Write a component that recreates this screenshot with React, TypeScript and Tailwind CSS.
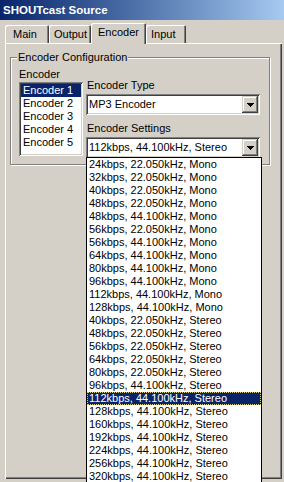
import React from 'react';

const settings = [
  '24kbps, 22.050kHz, Mono',
  '32kbps, 22.050kHz, Mono',
  '40kbps, 22.050kHz, Mono',
  '48kbps, 22.050kHz, Mono',
  '48kbps, 44.100kHz, Mono',
  '56kbps, 22.050kHz, Mono',
  '56kbps, 44.100kHz, Mono',
  '64kbps, 44.100kHz, Mono',
  '80kbps, 44.100kHz, Mono',
  '96kbps, 44.100kHz, Mono',
  '112kbps, 44.100kHz, Mono',
  '128kbps, 44.100kHz, Mono',
  '40kbps, 22.050kHz, Stereo',
  '48kbps, 22.050kHz, Stereo',
  '56kbps, 22.050kHz, Stereo',
  '64kbps, 22.050kHz, Stereo',
  '80kbps, 22.050kHz, Stereo',
  '96kbps, 44.100kHz, Stereo',
  '112kbps, 44.100kHz, Stereo',
  '128kbps, 44.100kHz, Stereo',
  '160kbps, 44.100kHz, Stereo',
  '192kbps, 44.100kHz, Stereo',
  '224kbps, 44.100kHz, Stereo',
  '256kbps, 44.100kHz, Stereo',
  '320kbps, 44.100kHz, Stereo',
];

const encoders = ['Encoder 1', 'Encoder 2', 'Encoder 3', 'Encoder 4', 'Encoder 5'];

const ArrowButton = () => (
  <div className="w-[16px] h-[17px] bg-[#d4d0c8] flex items-center justify-center shadow-[inset_-1px_-1px_0_#404040,inset_1px_1px_0_#d4d0c8,inset_-2px_-2px_0_#808080,inset_2px_2px_0_#ffffff]">
    <svg width="7" height="4" viewBox="0 0 7 4" shapeRendering="crispEdges">
      <path d="M0 0h7v1h-1v1h-1v1h-1v1h-1v-1h-1v-1h-1v-1h-1z" fill="#000" />
    </svg>
  </div>
);

const Combo: React.FC<{ value: string }> = ({ value }) => (
  <div className="w-[174px] h-[21px] bg-white flex items-center p-[2px] shadow-[inset_1px_1px_0_#808080,inset_-1px_-1px_0_#ffffff,inset_2px_2px_0_#404040,inset_-2px_-2px_0_#d4d0c8]">
    <span className="flex-1 pl-[1px] leading-[13px]">{value}</span>
    <ArrowButton />
  </div>
);

const tabs = [
  { label: 'Main', w: 'w-[44px] pl-[8px]' },
  { label: 'Output', w: 'w-[42px] pl-[5px]' },
  { label: 'Encoder', w: 'w-[55px] pl-[7px]', active: true },
  { label: 'Input', w: 'w-[40px] pl-[5px]' },
];

export default function App() {
  return (
    <div className="w-[284px] h-[482px] bg-[#d4d0c8] overflow-hidden text-[11px] text-black font-['Liberation_Sans',Arial,sans-serif]">
      {/* title bar */}
      <div className="h-[20px] bg-linear-to-r from-[#0a246a] to-[#a6caf0] text-white font-bold text-[11.5px] pl-[3px] pt-[1px] flex items-center">
        SHOUTcast Source
      </div>

      <div className="pl-[5px] pt-[3px]">
        {/* tabs */}
        <div className="flex items-end h-[20px]">
          {tabs.map((t) =>
            t.active ? (
              <div
                key={t.label}
                className={`${t.w} h-[21px] -mb-[1px] relative z-10 bg-[#d4d0c8] pt-[3px] leading-[13px] rounded-t-[2px] shadow-[inset_1px_1px_0_#ffffff,inset_-1px_0_0_#404040,inset_-2px_0_0_#808080]`}
              >
                {t.label}
              </div>
            ) : (
              <div
                key={t.label}
                className={`${t.w} h-[18px] pt-[3px] leading-[13px] rounded-t-[2px] shadow-[inset_1px_1px_0_#ffffff,inset_-1px_0_0_#404040,inset_-2px_0_0_#808080]`}
              >
                {t.label}
              </div>
            )
          )}
        </div>

        {/* tab panel */}
        <div className="w-[277px] h-[436px] pt-[14px] pl-[5px] shadow-[inset_1px_1px_0_#ffffff,inset_-1px_-1px_0_#404040,inset_-2px_-2px_0_#808080]">
          {/* group box */}
          <div className="relative w-[260px] h-[108px] border border-[#808080] shadow-[inset_1px_1px_0_#ffffff,1px_1px_0_#ffffff] pt-[10px] pl-[8px]">
            <span className="absolute -top-[7px] left-[6px] px-[1px] bg-[#d4d0c8] leading-[13px]">Encoder Configuration</span>

            <div className="flex">
              <div className="flex flex-col w-[64px]">
                <div className="h-[13px] leading-[13px]">Encoder</div>
                <div className="mt-[1px] h-[74px] bg-white p-[2px] shadow-[inset_1px_1px_0_#808080,inset_-1px_-1px_0_#ffffff,inset_2px_2px_0_#404040,inset_-2px_-2px_0_#d4d0c8]">
                  {encoders.map((e, i) => (
                    <div
                      key={e}
                      className={`h-[13px] leading-[13px] pl-[2px] ${i === 0 ? 'bg-[#0a246a] text-white' : ''}`}
                    >
                      {e}
                    </div>
                  ))}
                </div>
              </div>

              <div className="ml-[3px] pt-[11px] flex flex-col">
                <div className="h-[13px] leading-[13px] pl-[1px]">Encoder Type</div>
                <div className="mt-[2px]">
                  <Combo value="MP3 Encoder" />
                </div>
                <div className="mt-[7px] h-[13px] leading-[13px] pl-[1px]">Encoder Settings</div>
                <div className="mt-[2px] relative">
                  <Combo value="112kbps, 44.100kHz, Stereo" />
                  {/* open dropdown list */}
                  <div className="absolute z-20 top-[20px] left-0 w-[176px] bg-white border border-black">
                    {settings.map((s, i) => (
                      <div
                        key={i}
                        className={`h-[13px] leading-[13px] pl-[2px] whitespace-nowrap ${
                          i === 18
                            ? 'bg-[#0a246a] text-white outline-1 outline-dotted -outline-offset-1 outline-[#d8cf8a]'
                            : ''
                        }`}
                      >
                        {s}
                      </div>
                    ))}
                  </div>
                </div>
              </div>
            </div>
          </div>
        </div>
      </div>
    </div>
  );
}
